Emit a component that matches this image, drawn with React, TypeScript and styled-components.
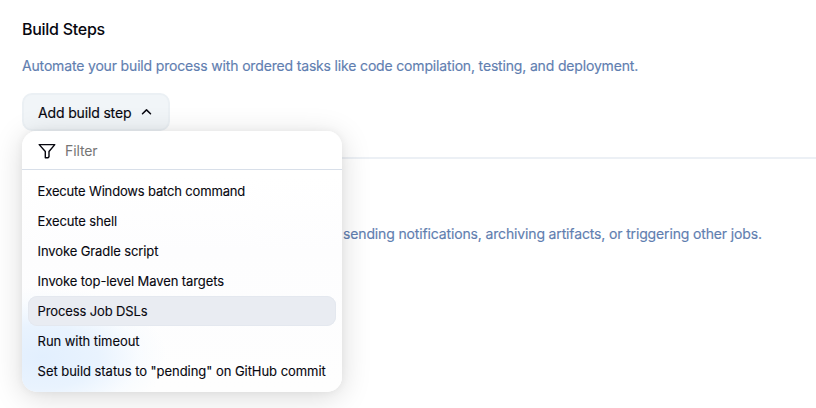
import React from 'react';
import styled, { createGlobalStyle } from 'styled-components';

const GlobalStyle = createGlobalStyle`
  * { box-sizing: border-box; }
  body {
    margin: 0;
    background: #fff;
    color: #07070f;
    font-family: Inter, "Liberation Sans", sans-serif;
    overflow: hidden;
  }
`;

const Page = styled.main`
  height: 408px;
  overflow: hidden;
  padding: 17px 0 0 22px;
`;

const Title = styled.h2`
  margin: 0;
  font-size: 16px;
  line-height: 24px;
  font-weight: 450;
  letter-spacing: -0.27px;
`;

const Description = styled.p<{ $indent?: number }>`
  margin: 0;
  padding-left: ${(p) => p.$indent ?? 0}px;
  font-size: 14px;
  line-height: 20px;
  font-weight: 400;
  -webkit-text-stroke: 0.15px #5f7eb0;
  letter-spacing: -0.145px;
  color: #5f7eb0;
  white-space: nowrap;
`;

const Section = styled.section`
  display: flex;
  flex-direction: column;
  align-items: flex-start;
`;

const BuildDescription = styled(Description)`
  margin-top: 15px;
  letter-spacing: -0.165px;
`;

const DropdownAnchor = styled.div`
  position: relative;
  margin-top: 17px;
`;

const AddButton = styled.button`
  display: flex;
  align-items: center;
  gap: 10px;
  width: 148px;
  height: 38px;
  padding: 2px 14px 0;
  border: 2px solid #ebf0f4;
  border-radius: 10px;
  background: #f1f5f8;
  color: inherit;
  font: 400 14px/20px Inter, "Liberation Sans", sans-serif;
  -webkit-text-stroke: 0.15px #07070f;
  letter-spacing: -0.15px;
  white-space: nowrap;
`;

const Chevron = styled.svg`
  margin-top: -2px;
`;

const Menu = styled.div`
  position: absolute;
  top: 38px;
  left: 0;
  width: 320px;
  height: 261px;
  border-radius: 15px;
  overflow: hidden;
  background:
    radial-gradient(ellipse 125px 70px at 20px 226px, #e2effe 0%, #e9f3fe 45%, rgba(245, 250, 255, 0.6) 78%, rgba(255, 255, 255, 0) 100%),
    linear-gradient(#fff 0, #fff 45px, #fdfdfe 120px, #fefefe 100%);
  box-shadow: 0 0 8px rgba(0, 0, 0, 0.05), 0 5px 30px rgba(0, 0, 0, 0.15);
`;

const FilterBar = styled.label`
  display: flex;
  align-items: center;
  gap: 9px;
  height: 39px;
  padding: 2px 0 0 16px;
  border-bottom: 1px solid #d8dfe9;
`;

const FilterInput = styled.input`
  width: 240px;
  padding: 0;
  border: 0;
  outline: 0;
  background: transparent;
  font: 400 14px/20px Inter, "Liberation Sans", sans-serif;
  letter-spacing: -0.12px;
  &::placeholder { color: #757575; opacity: 1; }
`;

const Items = styled.ul`
  margin: 0;
  padding: 6px;
  list-style: none;
`;

const Item = styled.li<{ $active?: boolean; $spacing: number }>`
  height: 30px;
  padding-left: 9.6px;
  border-radius: 9px;
  font-size: 13px;
  line-height: 30px;
  font-weight: 400;
  -webkit-text-stroke: 0.12px #07070f;
  letter-spacing: ${(p) => p.$spacing}px;
  white-space: nowrap;
  background: ${(p) => (p.$active ? '#e9ecf2' : 'transparent')};
  box-shadow: ${(p) => (p.$active ? 'inset 0 0 0 1px #e4e8ef' : 'none')};
`;

const Divider = styled.hr`
  width: 100%;
  height: 2px;
  margin: 26px 0 65px;
  border: 0;
  background: #ecf0f5;
`;

const steps = [
  { label: 'Execute Windows batch command', spacing: -0.16 },
  { label: 'Execute shell', spacing: -0.13 },
  { label: 'Invoke Gradle script', spacing: -0.11 },
  { label: 'Invoke top-level Maven targets', spacing: -0.1 },
  { label: 'Process Job DSLs', spacing: -0.13, active: true },
  { label: 'Run with timeout', spacing: -0.06 },
  { label: 'Set build status to "pending" on GitHub commit', spacing: -0.045 },
];

export default function App() {
  return (
    <>
      <GlobalStyle />
      <Page>
        <Section>
          <Title>Build Steps</Title>
          <BuildDescription>
            Automate your build process with ordered tasks like code compilation, testing, and deployment.
          </BuildDescription>
          <DropdownAnchor>
            <AddButton>
              Add build step
              <Chevron width="12" height="12" viewBox="0 0 12 12" fill="none" stroke="#07070f" strokeWidth="1.5" strokeLinecap="round" strokeLinejoin="round">
                <path d="M1.5 7.7 5.5 3.9 9.5 7.7" />
              </Chevron>
            </AddButton>
            <Menu>
              <FilterBar>
                <svg width="18" height="18" viewBox="0 0 18 18" fill="none" stroke="#07070f" strokeWidth="1.4" strokeLinejoin="round">
                  <path d="M1.2 2.6h15.6l-5.8 6.9v5.2l-1 1.1H7.3V9.5z" />
                </svg>
                <FilterInput placeholder="Filter" />
              </FilterBar>
              <Items>
                {steps.map((s) => (
                  <Item key={s.label} $active={s.active} $spacing={s.spacing}>{s.label}</Item>
                ))}
              </Items>
            </Menu>
          </DropdownAnchor>
        </Section>
        <Divider />
        <Section>
          <Description $indent={321}>
            sending notifications, archiving artifacts, or triggering other jobs.
          </Description>
        </Section>
      </Page>
    </>
  );
}
